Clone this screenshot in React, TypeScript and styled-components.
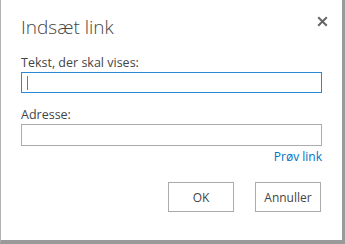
import React from "react";
import styled, { createGlobalStyle } from "styled-components";

const Global = createGlobalStyle`
  html, body {
    margin: 0;
    padding: 0;
    background: #ffffff;
  }
  * {
    box-sizing: border-box;
  }
`;

const Dialog = styled.div`
  width: 345px;
  height: 244px;
  background: #ffffff;
  border-left: 1px solid #b4b4b4;
  border-right: 3px solid #9a9a9a;
  border-bottom: 4px solid #9a9a9a;
  padding: 14px 20px 0 20px;
  font-family: "Open Sans", "Liberation Sans", sans-serif;
  color: #444444;
`;

const Header = styled.div`
  display: flex;
  align-items: flex-start;
  justify-content: space-between;
  height: 40px;
`;

const Title = styled.h1`
  margin: 0;
  font-size: 19px;
  font-weight: 300;
  line-height: 26px;
  color: #444444;
`;

const CloseButton = styled.button`
  border: 0;
  background: none;
  padding: 0;
  margin: 2px -6px 0 0;
  width: 11px;
  height: 11px;
  display: flex;
  cursor: pointer;
`;

const Field = styled.div<{ $gap?: number }>`
  display: flex;
  flex-direction: column;
  margin-top: ${({ $gap }) => $gap ?? 0}px;
`;

const Label = styled.label`
  font-size: 12.5px;
  line-height: 18px;
  color: #444444;
`;

const Input = styled.div<{ $focused?: boolean }>`
  position: relative;
  height: ${({ $focused }) => ($focused ? "21px" : "22px")};
  border: 1px solid ${({ $focused }) => ($focused ? "#2b88d8" : "#ababab")};
  background: #ffffff;
`;

const Caret = styled.span`
  position: absolute;
  left: 5px;
  top: 3px;
  width: 1px;
  height: 14px;
  background: #777777;
`;

const TryLink = styled.a`
  align-self: flex-end;
  font-size: 12px;
  line-height: 16px;
  color: #0072c6;
  margin-top: 3px;
  text-decoration: none;
`;

const Buttons = styled.div`
  display: flex;
  justify-content: flex-end;
  gap: 21px;
  margin-top: 17px;
  padding-right: 1px;
`;

const Button = styled.button`
  width: 66px;
  height: 30px;
  border: 1px solid #ababab;
  background: #ffffff;
  font-family: "Open Sans", "Liberation Sans", sans-serif;
  font-size: 12px;
  color: #444444;
  padding: 0;
`;

export default function App() {
  return (
    <>
      <Global />
      <Dialog>
        <Header>
          <Title>Indsæt link</Title>
          <CloseButton aria-label="Luk">
            <svg width="11" height="11" viewBox="0 0 11 11">
              <path d="M1.2 1.2 L9.8 9.8 M9.8 1.2 L1.2 9.8" stroke="#666" strokeWidth="2" />
            </svg>
          </CloseButton>
        </Header>
        <Field>
          <Label>Tekst, der skal vises:</Label>
          <Input $focused>
            <Caret />
          </Input>
        </Field>
        <Field $gap={13}>
          <Label>Adresse:</Label>
          <Input />
          <TryLink href="#">Prøv link</TryLink>
        </Field>
        <Buttons>
          <Button>OK</Button>
          <Button>Annuller</Button>
        </Buttons>
      </Dialog>
    </>
  );
}
